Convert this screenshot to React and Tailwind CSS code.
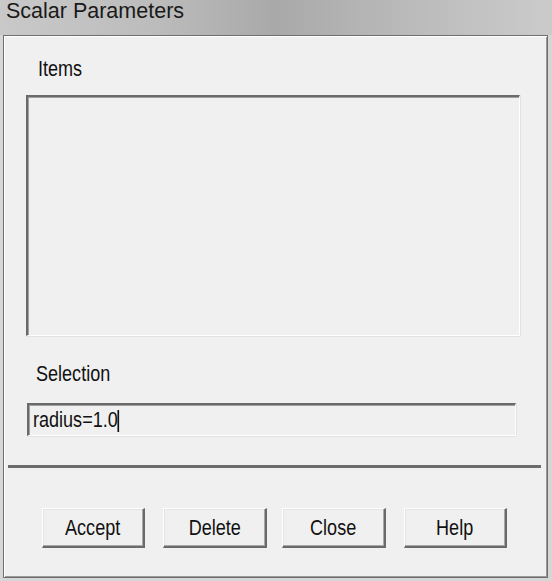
import React from "react";

const ui = { fontFamily: '"Liberation Sans", Arial, sans-serif' };

// the dialog font is a narrow bitmap face; squeeze Liberation Sans to its width
const Narrow = ({ children, className = "" }) => (
  <span className={`inline-block scale-x-[0.82] ${className}`}>{children}</span>
);

const Button = ({ label, className }) => (
  <div
    className={`h-[40px] flex items-center justify-center bg-[#f0f0f0] text-[22px] leading-[26px] text-[#111] border-t border-l border-white border-r-2 border-b-2 border-r-[#6a6a6a] border-b-[#6a6a6a] shadow-[inset_-1px_-1px_0_#a8a8a8,inset_1px_1px_0_#e4e4e4] ${className}`}
  >
    <Narrow className="origin-center">{label}</Narrow>
  </div>
);

export default function App() {
  return (
    <div
      className="w-[552px] h-[581px] flex flex-col bg-[#d6d6d6] overflow-hidden"
      style={ui}
    >
      {/* Title bar */}
      <div className="h-[35px] shrink-0 bg-[linear-gradient(90deg,#c9c9c9_0%,#bcbcbc_28%,#a9a9a9_50%,#bdbdbd_78%,#cbcbcb_100%)]">
        <div className="pl-[6px] pt-[1px] text-[21.5px] leading-[20px] text-[#1a1a1a]">
          Scalar Parameters
        </div>
      </div>

      {/* Dialog body */}
      <div className="ml-[3px] w-[545px] h-[543px] border border-[#6f6f6f] bg-[#f0f0f0] shadow-[inset_1px_1px_0_#ffffff,inset_-1px_-1px_0_#9a9a9a] flex flex-col">
        <div className="mt-[20px] ml-[34px] text-[22px] leading-[26px] text-[#111]">
          <Narrow className="origin-left">Items</Narrow>
        </div>

        <div className="mt-[13px] ml-[22px] w-[494px] h-[241px] border-t-2 border-l-2 border-t-[#6a6a6a] border-l-[#6a6a6a] border-b border-r border-b-white border-r-white shadow-[inset_1px_1px_0_#a0a0a0,0_1px_0_#e2e2e2,1px_0_0_#e2e2e2] bg-[#f0f0f0]" />

        <div className="mt-[25px] ml-[32px] text-[22px] leading-[26px] text-[#111]">
          <Narrow className="origin-left">Selection</Narrow>
        </div>

        <div className="mt-[16px] ml-[23px] w-[489px] h-[33px] border-t-2 border-l-2 border-t-[#6a6a6a] border-l-[#6a6a6a] border-b border-r border-b-white border-r-white shadow-[inset_1px_1px_0_#a0a0a0,0_1px_0_#e2e2e2,1px_0_0_#e2e2e2] bg-[#f0f0f0] pt-[2px] pl-[4px]">
          <Narrow className="origin-left">
            <span className="flex items-start">
              <span className="text-[22px] leading-[26px] text-[#111]">radius=1.0</span>
              <span className="mt-[3px] w-[2px] h-[22px] bg-[#111]" />
            </span>
          </Narrow>
        </div>

        <div className="mt-[29px] ml-[4px] w-[533px] h-[3px] bg-[#6c6c6c]" />

        <div className="mt-[40px] flex">
          <Button label="Accept" className="ml-[38px] w-[103px]" />
          <Button label="Delete" className="ml-[18px] w-[104px]" />
          <Button label="Close" className="ml-[15px] w-[104px]" />
          <Button label="Help" className="ml-[18px] w-[103px]" />
        </div>
      </div>
    </div>
  );
}
